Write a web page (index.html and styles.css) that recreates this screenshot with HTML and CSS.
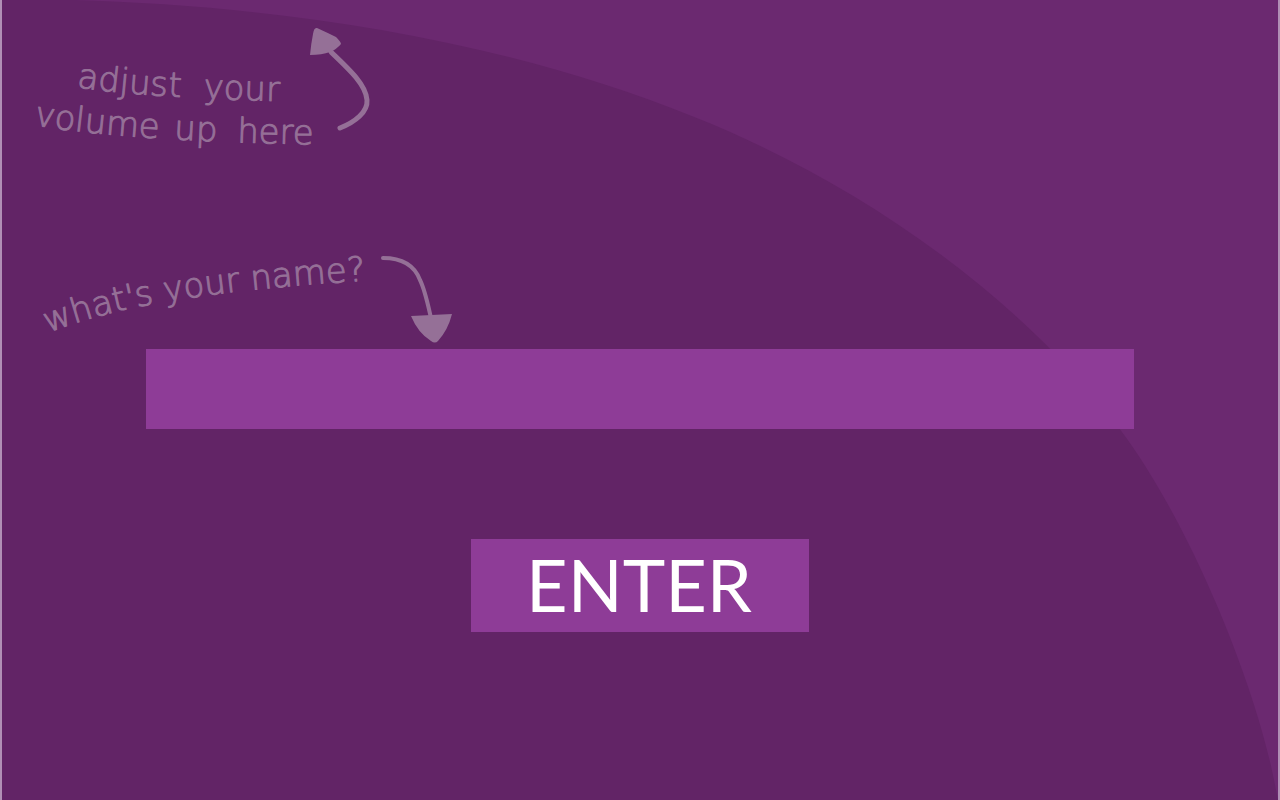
FILE: index.html
```
<!DOCTYPE html>
<html lang="en">
<head>
<meta charset="utf-8">
<meta name="viewport" content="width=device-width, initial-scale=1">
<title>Enter your name</title>
<link rel="stylesheet" href="styles.css">
</head>
<body>
<main class="page">
  <svg class="backdrop" viewBox="0 0 1280 800" preserveAspectRatio="none" aria-hidden="true">
    <path d="M0 -1C230 -1 480 30 697 118C850 179 1015 288 1122 430C1190 520 1256 680 1276 780L1280 800H0Z"/>
  </svg>
  <svg class="note note-volume" viewBox="2 24 380 140" role="img" aria-label="adjust your volume up here">
    <path id="volume-top" class="guide" d="M77 87Q150 99 320 102"/>
    <path id="volume-bottom" class="guide" d="M34 125Q130 142 350 145"/>
    <text><textPath href="#volume-top">adjust</textPath></text>
    <text><textPath href="#volume-top" startOffset="127">your</textPath></text>
    <text><textPath href="#volume-bottom">volume</textPath></text>
    <text><textPath href="#volume-bottom" startOffset="141">up</textPath></text>
    <text><textPath href="#volume-bottom" startOffset="204">here</textPath></text>
    <path class="shaft shaft-thick" d="M340 128C355 122 368 112 367 100C366 85 350 70 331 52"/>
    <path class="head" d="M317 28Q314 27 313 34Q311 44 310 55Q322 55 330 52Q337 49 341 44Q341 42 336 37Q328 33 317 28Z"/>
  </svg>
  <form class="entry">
    <label class="name-label" for="name">
      <svg class="note note-name" viewBox="2 240 480 109" role="img" aria-label="what's your name?">
        <path id="name-line" class="guide" d="M48 333C110 308 200 290 390 279"/>
        <text><textPath href="#name-line">what's your name?</textPath></text>
        <path class="shaft" d="M383 258C400 258 414 264 420 280C425 290 428 305 431 318"/>
        <path class="head" d="M411 316L452 314Q448 330 438 341Q435 344 431 341Q418 333 411 316Z"/>
      </svg>
    </label>
    <input class="name-field" id="name" type="text" autocomplete="off">
    <button class="enter" type="submit">ENTER</button>
  </form>
</main>
</body>
</html>
```
FILE: styles.css
```
* {
  box-sizing: border-box;
}

body {
  margin: 0;
  background: #6b2970;
}

.page {
  position: relative;
  display: flex;
  flex-direction: column;
  min-height: 100vh;
  padding: 24px 0 64px;
  border: solid #b08fb5;
  border-width: 0 2px;
  overflow: hidden;
}

.backdrop {
  position: absolute;
  inset: 0;
  width: 100%;
  height: 100%;
  z-index: -1;
  fill: #622466;
}

.note {
  display: block;
  max-width: 100%;
  font-family: "DejaVu Sans", sans-serif;
  font-weight: 200;
  font-size: 34px;
  fill: #957097;
}

.note text {
  stroke: #957097;
  stroke-width: 1px;
  stroke-linejoin: round;
}

.note-volume {
  width: 380px;
}

.note-name {
  width: 480px;
}

.guide {
  fill: none;
}

.shaft {
  fill: none;
  stroke: #957097;
  stroke-width: 4;
  stroke-linecap: round;
}

.shaft-thick {
  stroke-width: 5;
}

.entry {
  display: flex;
  flex-direction: column;
  align-items: center;
  margin-top: 76px;
}

.name-label {
  align-self: flex-start;
}

.name-field {
  width: 77.4%;
  height: 80px;
  padding: 0 24px;
  border: 0;
  border-radius: 0;
  background: #8e3c97;
  color: #fff;
  font: 48px Lato, sans-serif;
}

.enter {
  margin-top: 110px;
  padding: 0 57px 3px 55px;
  border: 0;
  background: #8e3c97;
  color: #fff;
  font: 72px/90px Lato, sans-serif;
}
```
